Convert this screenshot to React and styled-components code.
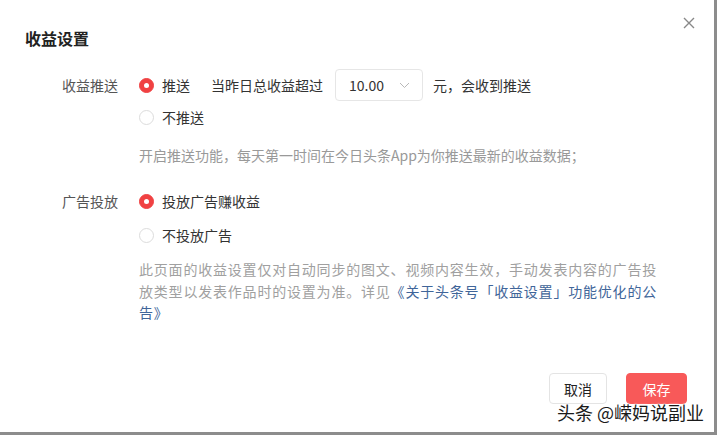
import styled, { createGlobalStyle } from "styled-components"

const GlobalStyle = createGlobalStyle`
  html, body {
    margin: 0;
    padding: 0;
    background: #ffffff;
  }
  body {
    font-family: "Noto Sans CJK SC", "Noto Sans", "Liberation Sans", sans-serif;
    color: #222;
  }
`

const Dialog = styled.div`
  position: relative;
  box-sizing: border-box;
  width: 717px;
  height: 435px;
  background: #fff;
  border-right: 3px solid #8c8c8c;
  border-bottom: 3px solid #8c8c8c;
  display: flex;
  flex-direction: column;
`

const Header = styled.div`
  display: flex;
  justify-content: space-between;
  align-items: flex-start;
  padding: 0 17px 0 25px;
`

const Title = styled.h2`
  margin: 28px 0 0;
  font-size: 16px;
  line-height: 20px;
  font-weight: 700;
  color: #222;
`

const Close = styled.button`
  margin-top: 15px;
  width: 16px;
  height: 16px;
  padding: 0;
  border: none;
  background: none;
  cursor: pointer;
`

const Body = styled.div`
  padding-left: 62px;
  display: flex;
  flex-direction: column;
`

const Section = styled.div`
  display: flex;
  margin-top: ${(p) => p.$top}px;
`

const Label = styled.div`
  width: 56px;
  margin-right: 21px;
  font-size: 14px;
  line-height: 32px;
  color: #555;
  white-space: nowrap;
`

const Options = styled.div`
  display: flex;
  flex-direction: column;
  gap: ${(p) => p.$gap || 0}px;
`

const OptionRow = styled.div`
  display: flex;
  align-items: center;
  height: 32px;
  font-size: 14px;
  color: #333;
  white-space: nowrap;
`

const Radio = styled.span`
  box-sizing: border-box;
  width: 15px;
  height: 15px;
  border-radius: 50%;
  margin-right: 8px;
  display: inline-flex;
  align-items: center;
  justify-content: center;
  background: ${(p) => (p.$checked ? "#f04142" : "#fff")};
  border: 1px solid ${(p) => (p.$checked ? "#f04142" : "#dcdcdc")};
  &::after {
    content: "";
    width: 5px;
    height: 5px;
    border-radius: 50%;
    background: #fff;
    display: ${(p) => (p.$checked ? "block" : "none")};
  }
`

const Inline = styled.span`
  margin-left: ${(p) => p.$left || 0}px;
  margin-right: ${(p) => p.$right || 0}px;
`

const Select = styled.div`
  box-sizing: border-box;
  width: 88px;
  height: 32px;
  border: 1px solid #e6e6e6;
  border-radius: 4px;
  display: flex;
  align-items: center;
  justify-content: space-between;
  padding: 0 12px 0 13px;
  font-size: 14px;
  color: #333;
`

const Help = styled.p`
  margin: ${(p) => p.$top || 0}px 0 0;
  font-size: 14px;
  line-height: 20px;
  color: #999;
  white-space: nowrap;
`

const Note = styled.p`
  margin: 8px 0 0 77px;
  width: 525px;
  font-size: 14px;
  letter-spacing: 0.8px;
  line-height: 21.5px;
  color: #a0a0a0;
`

const Link = styled.a`
  color: #406599;
  text-decoration: none;
`

const Footer = styled.div`
  margin-top: auto;
  display: flex;
  justify-content: flex-end;
  gap: 19px;
  padding: 0 27px 28px 0;
`

const Button = styled.button`
  box-sizing: border-box;
  height: 31px;
  width: ${(p) => (p.$primary ? 61 : 58)}px;
  border-radius: 4px;
  font-family: inherit;
  font-size: 14px;
  cursor: pointer;
  border: 1px solid ${(p) => (p.$primary ? "#f85959" : "#e4e4e4")};
  background: ${(p) => (p.$primary ? "#f85959" : "#fff")};
  color: ${(p) => (p.$primary ? "#fff" : "#222")};
`

const Watermark = styled.div`
  position: absolute;
  left: 557px;
  top: 401px;
  font-size: 18px;
  line-height: 22px;
  color: #1a1a1a;
  white-space: nowrap;
  text-shadow: 0 0 2px #fff, 0 0 2px #fff, 0 0 3px #fff;
`

const Chevron = () => (
  <svg width="11" height="7" viewBox="0 0 11 7" fill="none">
    <path d="M1 1l4.5 4.5L10 1" stroke="#b8b8b8" strokeWidth="1" />
  </svg>
)

const CloseIcon = () => (
  <svg width="16" height="16" viewBox="0 0 16 16" fill="none">
    <path d="M3 3l10 10M13 3L3 13" stroke="#888" strokeWidth="1.4" />
  </svg>
)

function App() {
  return (
    <>
      <GlobalStyle />
      <Dialog>
        <Header>
          <Title>收益设置</Title>
          <Close aria-label="close">
            <CloseIcon />
          </Close>
        </Header>
        <Body>
          <Section $top={21}>
            <Label>收益推送</Label>
            <Options>
              <OptionRow>
                <Radio $checked />
                <Inline $right={21}>推送</Inline>
                <Inline $right={12}>当昨日总收益超过</Inline>
                <Select>
                  10.00
                  <Chevron />
                </Select>
                <Inline $left={10}>元，会收到推送</Inline>
              </OptionRow>
              <OptionRow>
                <Radio />
                <Inline>不推送</Inline>
              </OptionRow>
              <Help $top={12}>开启推送功能，每天第一时间在今日头条App为你推送最新的收益数据；</Help>
            </Options>
          </Section>
          <Section $top={20}>
            <Label>广告投放</Label>
            <Options $gap={2}>
              <OptionRow>
                <Radio $checked />
                <Inline>投放广告赚收益</Inline>
              </OptionRow>
              <OptionRow>
                <Radio />
                <Inline>不投放广告</Inline>
              </OptionRow>
            </Options>
          </Section>
          <Note>
            此页面的收益设置仅对自动同步的图文、视频内容生效，手动发表内容的广告投放类型以发表作品时的设置为准。详见
            <Link href="#">《关于头条号「收益设置」功能优化的公告》</Link>
          </Note>
        </Body>
        <Footer>
          <Button>取消</Button>
          <Button $primary>保存</Button>
        </Footer>
        <Watermark>头条 @嵘妈说副业</Watermark>
      </Dialog>
    </>
  )
}

export default App
